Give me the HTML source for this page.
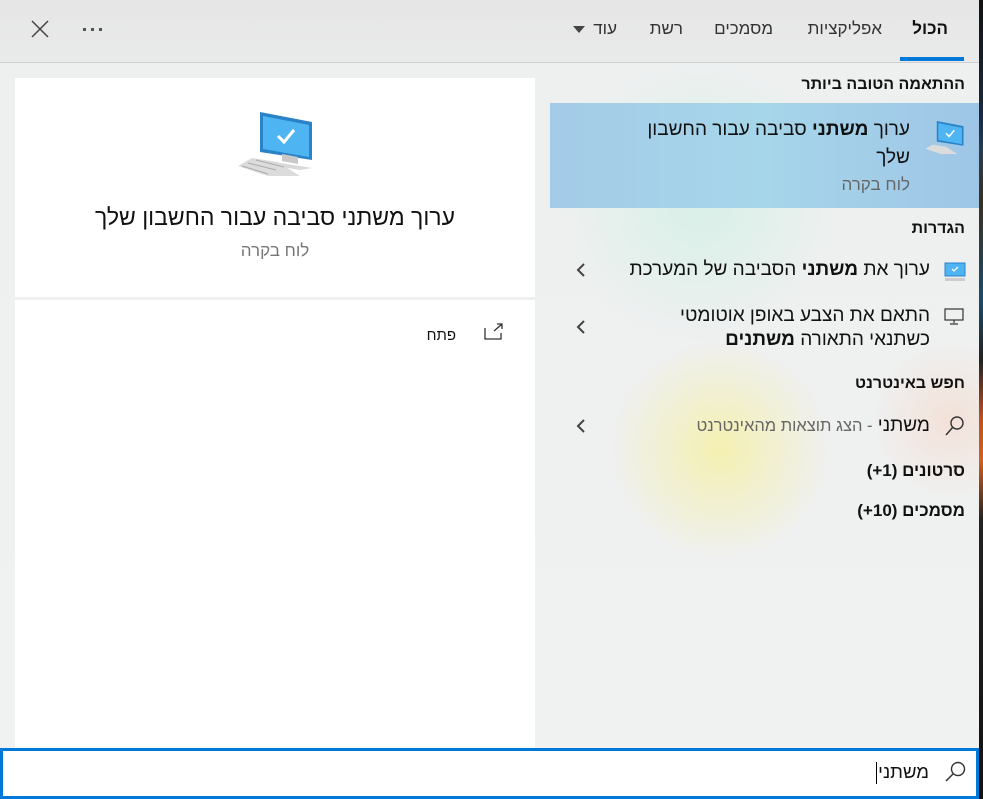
<!DOCTYPE html>
<html><head><meta charset="utf-8"><style>
*{margin:0;padding:0;box-sizing:border-box}
body{width:983px;height:799px;overflow:hidden;position:relative;font-family:"Liberation Sans","Noto Sans CJK SC",sans-serif;color:#000;
background:#eef0f1}
.abs{position:absolute}
.bg{left:0;top:0;width:979px;height:799px;background:
radial-gradient(circle at 720px 450px,rgba(245,240,170,.9) 0,rgba(245,240,170,0) 110px),
radial-gradient(circle at 700px 200px,rgba(200,240,225,.6) 0,rgba(200,240,225,0) 140px),
radial-gradient(circle at 950px 420px,rgba(245,215,200,.6) 0,rgba(245,215,200,0) 80px),
linear-gradient(#e6e6e6 0,#e9eaea 62px,#eef0f0 63px,#f0f1f1 799px)}
.strip{left:979px;top:0;width:4px;height:799px;background:linear-gradient(#111 0,#1a2a40 120px,#2a3b50 150px,#3a3020 200px,#1b4a6a 300px,#222 360px,#c05020 420px,#d06020 460px,#222 520px,#111 799px)}
.tab{top:19px;font-size:17px;color:#333;direction:rtl}
.r{direction:rtl;text-align:right;white-space:nowrap}
.h{font-size:16px;font-weight:bold;color:#111}
.t{font-size:19px;color:#111}
</style></head><body>
<div class="abs bg"></div>
<div class="abs strip"></div>
<div class="abs" style="left:0;top:62px;width:979px;height:1px;background:#cfcfcf"></div>
<svg class="abs" style="left:31px;top:20px" width="18" height="18"><path d="M1 1L17 17M17 1L1 17" stroke="#444" stroke-width="1.5"/></svg>
<div class="abs" style="left:83px;top:28px;width:20px;height:3px;">
<span class="abs" style="left:0;width:3px;height:3px;background:#555"></span><span class="abs" style="left:8px;width:3px;height:3px;background:#555"></span><span class="abs" style="left:16px;width:3px;height:3px;background:#555"></span></div>
<div class="abs tab" style="right:35px;font-weight:bold;color:#111">הכול</div>
<div class="abs" style="left:900px;top:57px;width:64px;height:4px;background:#0078d7"></div>
<div class="abs tab" style="right:101px">אפליקציות</div>
<div class="abs tab" style="right:210px">מסמכים</div>
<div class="abs tab" style="right:300px">רשת</div>
<div class="abs tab" style="right:366px">עוד</div>
<svg class="abs" style="left:573px;top:26px" width="12" height="8"><path d="M0 0H12L6 7Z" fill="#444"/></svg>
<div class="abs" style="left:15px;top:78px;width:520px;height:219px;background:#fff"></div>
<div class="abs" style="left:15px;top:300px;width:520px;height:448px;background:#fff"></div>
<svg class="abs" style="left:238px;top:110px" width="76" height="70" viewBox="0 0 76 70">
<path d="M22 2L74 12V50L22 42Z" fill="#2a82c9"/><path d="M25 6L71 15V47L25 39Z" fill="#4fb4f2"/>
<path d="M40 26L46 32L56 20" stroke="#fff" stroke-width="3" fill="none"/>
<path d="M44 44L60 47V54L44 51Z" fill="#c8c8c8"/><path d="M36 52L74 58L62 60L26 54Z" fill="#d8d8d8"/>
<path d="M14 48L40 52L62 66L30 66L0 56Z" fill="#dcdcdc"/><path d="M4 56L30 64M10 53L38 60M18 50L46 57" stroke="#aaa" stroke-width="1"/></svg>
<div class="abs" style="left:15px;width:520px;text-align:center;top:204px;font-size:23px;color:#111;direction:rtl">ערוך משתני סביבה עבור החשבון שלך</div>
<div class="abs" style="left:15px;width:520px;text-align:center;top:241px;font-size:17px;color:#777;direction:rtl">לוח בקרה</div>
<div class="abs r" style="right:527px;top:327px;font-size:15px;color:#111">פתח</div>
<svg class="abs" style="left:484px;top:323px" width="20" height="18"><path d="M1 5V16H17V10" stroke="#333" fill="none" stroke-width="1.3"/><path d="M10 8L18 1M13 1H18V6" stroke="#333" fill="none" stroke-width="1.3"/></svg>
<div class="abs h r" style="right:18px;top:76px">ההתאמה הטובה ביותר</div>
<div class="abs" style="left:550px;top:103px;width:429px;height:105px;background:linear-gradient(90deg,#a4cbe8,#a6d6ea 50%,#9ec5e6)"></div>
<svg class="abs" style="left:924px;top:120px" width="42" height="36" viewBox="0 0 76 70">
<path d="M22 2L74 12V50L22 42Z" fill="#2a82c9"/><path d="M25 6L71 15V47L25 39Z" fill="#4fb4f2"/>
<path d="M40 26L46 32L56 20" stroke="#fff" stroke-width="3" fill="none"/>
<path d="M14 48L40 52L62 66L30 66L0 56Z" fill="#dcdcdc"/></svg>
<div class="abs r" style="right:73px;top:116px;font-size:19px;line-height:28px;color:#111;width:300px;white-space:normal">ערוך <b>משתני</b> סביבה עבור החשבון<br>שלך</div>
<div class="abs r" style="right:73px;top:175px;font-size:17px;color:#666">לוח בקרה</div>
<div class="abs h r" style="right:18px;top:220px">הגדרות</div>
<svg class="abs" style="left:944px;top:262px" width="22" height="20"><rect x="1" y="1" width="20" height="13" fill="#4fb4f2" stroke="#2a82c9"/><path d="M8 7L10 9L14 5" stroke="#fff" fill="none" stroke-width="1.3"/><rect x="1" y="16" width="20" height="3" fill="#ccc"/></svg>
<div class="abs t r" style="right:53px;top:259px">ערוך את <b>משתני</b> הסביבה של המערכת</div>
<svg class="abs" style="left:576px;top:262px" width="10" height="16"><path d="M8 2L2 8L8 14" stroke="#444" stroke-width="2" fill="none"/></svg>
<svg class="abs" style="left:944px;top:308px" width="22" height="18"><rect x="1" y="1" width="18" height="11" fill="none" stroke="#333" stroke-width="1.2"/><path d="M10 12V15M6 16H14" stroke="#333" stroke-width="1.2"/></svg>
<div class="abs t r" style="right:53px;top:304px;line-height:24px">התאם את הצבע באופן אוטומטי<br>כשתנאי התאורה <b>משתנים</b></div>
<svg class="abs" style="left:576px;top:319px" width="10" height="16"><path d="M8 2L2 8L8 14" stroke="#444" stroke-width="2" fill="none"/></svg>
<div class="abs h r" style="right:18px;top:375px">חפש באינטרנט</div>
<svg class="abs" style="left:944px;top:415px" width="22" height="22"><circle cx="13" cy="8" r="6" fill="none" stroke="#333" stroke-width="1.4"/><path d="M9 12L2 20" stroke="#333" stroke-width="1.5"/></svg>
<div class="abs r" style="right:53px;top:415px;font-size:19px;color:#111">משתני <span style="color:#666;font-size:16.5px">- הצג תוצאות מהאינטרנט</span></div>
<svg class="abs" style="left:576px;top:418px" width="10" height="16"><path d="M8 2L2 8L8 14" stroke="#444" stroke-width="2" fill="none"/></svg>
<div class="abs h r" style="right:18px;top:461px;font-size:17px">סרטונים (1+)</div>
<div class="abs h r" style="right:18px;top:501px;font-size:17px">מסמכים (10+)</div>
<div class="abs" style="left:0;top:748px;width:979px;height:51px;background:#fff;border:3px solid #0078d7"></div>
<svg class="abs" style="left:944px;top:760px" width="24" height="24"><circle cx="14" cy="9" r="6.5" fill="none" stroke="#333" stroke-width="1.4"/><path d="M9.5 13.5L2 21" stroke="#333" stroke-width="1.5"/></svg>
<div class="abs r" style="right:54px;top:761px;font-size:18.5px;color:#111">משתני</div>
<div class="abs" style="left:876px;top:762px;width:1px;height:22px;background:#000"></div>
</body></html>
